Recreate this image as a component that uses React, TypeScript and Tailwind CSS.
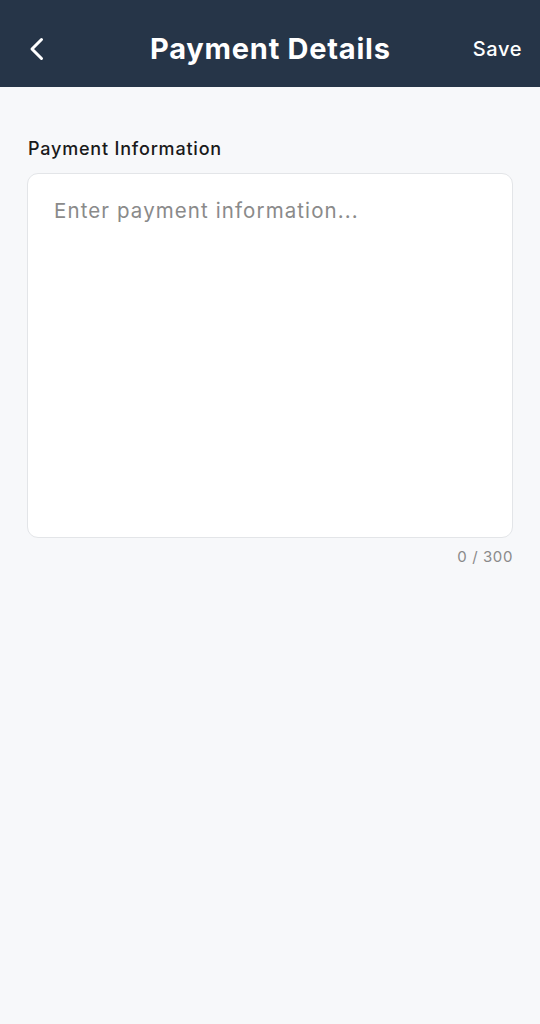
import React, { useState } from "react";

const PaymentDetails = () => {
  const [text, setText] = useState("");

  return (
    <div
      className="min-h-screen w-full bg-[#f7f8fa]"
      style={{ fontFamily: "Inter, 'Noto Sans', sans-serif" }}
    >
      {/* Header */}
      <div className="h-[87px] bg-[#263548] flex items-center justify-between pt-[11px] pl-[28px] pr-[18px]">
        <button className="w-[20px] h-[24px] flex items-center">
          <svg width="17" height="24" viewBox="0 0 17 24" fill="none">
            <path
              d="M13.5 2.5 L4 12 L13.5 21.5"
              stroke="white"
              strokeWidth="3"
              strokeLinecap="round"
              strokeLinejoin="round"
            />
          </svg>
        </button>
        <h1 className="text-white text-[29px] font-bold tracking-[0.75px] ml-[20px]">
          Payment Details
        </h1>
        <button className="text-white text-[20px] font-medium tracking-[0.6px]">
          Save
        </button>
      </div>

      {/* Body */}
      <div className="px-[27px] pt-[48px]">
        <label className="block text-[18px] font-medium text-[#1a1a1a] mb-[11px] pl-[1px] tracking-[0.8px]">
          Payment Information
        </label>
        <textarea
          value={text}
          onChange={(e) => setText(e.target.value.slice(0, 300))}
          placeholder="Enter payment information..."
          className="w-full h-[365px] bg-white border border-[#e3e5e8] rounded-[11px] px-[26px] py-[22px] text-[20.5px] text-[#222] placeholder:text-[#8a8a8a] resize-none outline-none tracking-[1.1px]"
        />
        <div className="text-right text-[15px] text-[#8a8a8a] mt-[2px] tracking-[0.6px]">
          {text.length} / 300
        </div>
      </div>
    </div>
  );
};

export default PaymentDetails;
